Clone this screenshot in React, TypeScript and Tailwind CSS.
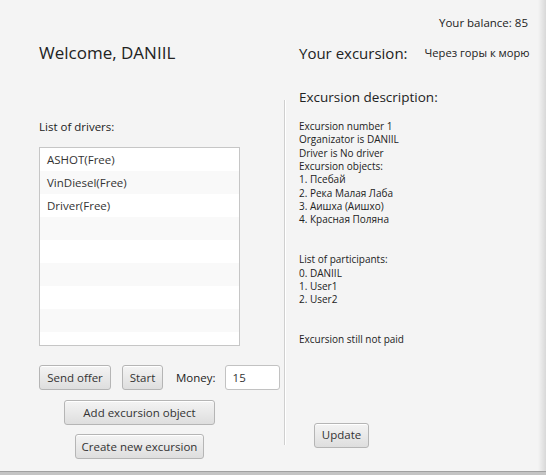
import React from "react";

const btn =
  "h-[25px] flex items-center justify-center rounded-[3px] border border-[#b5b5b5] bg-gradient-to-b from-[#f4f4f4] to-[#dedede] text-[11.5px] text-[#333] shadow-[inset_0_1px_0_#fff] whitespace-nowrap";

export default function App() {
  const drivers = ["ASHOT(Free)", "VinDiesel(Free)", "Driver(Free)"];
  const rows = Array.from({ length: 9 }, (_, i) => drivers[i] ?? "");
  const desc = [
    "Excursion number 1",
    "Organizator is DANIIL",
    "Driver is No driver",
    "Excursion objects:",
    "1. Псебай",
    "2. Река Малая Лаба",
    "3. Аишха (Аишхо)",
    "4. Красная Поляна",
    "",
    "",
    "List of participants:",
    "0. DANIIL",
    "1. User1",
    "2. User2",
    "",
    "",
    "Excursion still not paid",
  ];
  return (
    <div
      className="w-[546px] h-[475px] flex flex-col bg-[#f4f4f4] overflow-hidden text-[#333]"
      style={{ fontFamily: '"Open Sans", "Noto Sans", sans-serif' }}
    >
      <div className="flex flex-1">
        <div className="w-[538px] flex flex-col">
          <div className="pt-[15px] flex justify-end pr-[10px]">
            <span className="text-[11.5px] leading-[16px] text-[#222]">Your balance: 85</span>
          </div>
          <div className="mt-[10px] flex items-center h-[24px] whitespace-nowrap">
            <div className="w-[299px] shrink-0 pl-[39px] text-[17px] leading-[24px] text-[#222]">Welcome, DANIIL</div>
            <div className="flex items-center shrink-0">
              <span className="text-[15px] leading-[24px] text-[#222]">Your excursion:</span>
              <span className="ml-[17px] text-[11.2px] text-[#222]">Через горы к морю</span>
            </div>
          </div>
          <div className="flex">
            <div className="w-[284px] pl-[39px] flex flex-col">
              <div className="mt-[54px] text-[11.5px] leading-[16px] text-[#222]">List of drivers:</div>
              <div className="mt-[12px] w-[201px] h-[199px] border border-[#c6c6c6] bg-white overflow-hidden flex flex-col">
                {rows.map((r, i) => (
                  <div
                    key={i}
                    className={`h-[23px] shrink-0 flex items-center pl-[7px] text-[11.5px] text-[#333] ${i % 2 === 1 ? "bg-[#f9f9f9]" : "bg-white"}`}
                  >
                    {r}
                  </div>
                ))}
              </div>
              <div className="mt-[19px] flex items-center">
                <button className={`${btn} w-[72px]`}>Send offer</button>
                <button className={`${btn} w-[41px] ml-[11px]`}>Start</button>
                <span className="ml-[13px] text-[11.5px] text-[#222]">Money:</span>
                <div className="ml-[9px] w-[55px] h-[25px] rounded-[3px] border border-[#c2c2c2] bg-white flex items-center pl-[7px] text-[11.5px] text-[#333]">
                  15
                </div>
              </div>
              <div className="w-[201px] flex flex-col items-center">
                <button className={`${btn} mt-[10px] w-[151px]`}>Add excursion object</button>
                <button className={`${btn} mt-[9px] w-[129px]`}>Create new excursion</button>
              </div>
            </div>
            <div className="mt-[35px] h-[345px] w-[2px] border-l border-[#cfcfcf] border-r border-r-white" />
            <div className="pl-[13px] flex flex-col">
              <div className="mt-[22px] text-[13.5px] leading-[20px] text-[#222]">Excursion description:</div>
              <div className="mt-[13px] flex flex-col">
                {desc.map((d, i) => (
                  <div key={i} className="h-[13.33px] leading-[13.33px] text-[10px] text-[#222] whitespace-pre">
                    {d || " "}
                  </div>
                ))}
              </div>
              <button className={`${btn} mt-[76px] ml-[15px] w-[55px]`}>Update</button>
            </div>
          </div>
        </div>
        <div className="w-[8px] bg-gradient-to-r from-[#f4f4f4] to-[#d8d8d8]" />
      </div>
      <div className="h-[4px] flex flex-col">
        <div className="h-[1px] bg-[#a0a0a0]" />
        <div className="h-[3px] bg-[#c4c4c4]" />
      </div>
    </div>
  );
}
